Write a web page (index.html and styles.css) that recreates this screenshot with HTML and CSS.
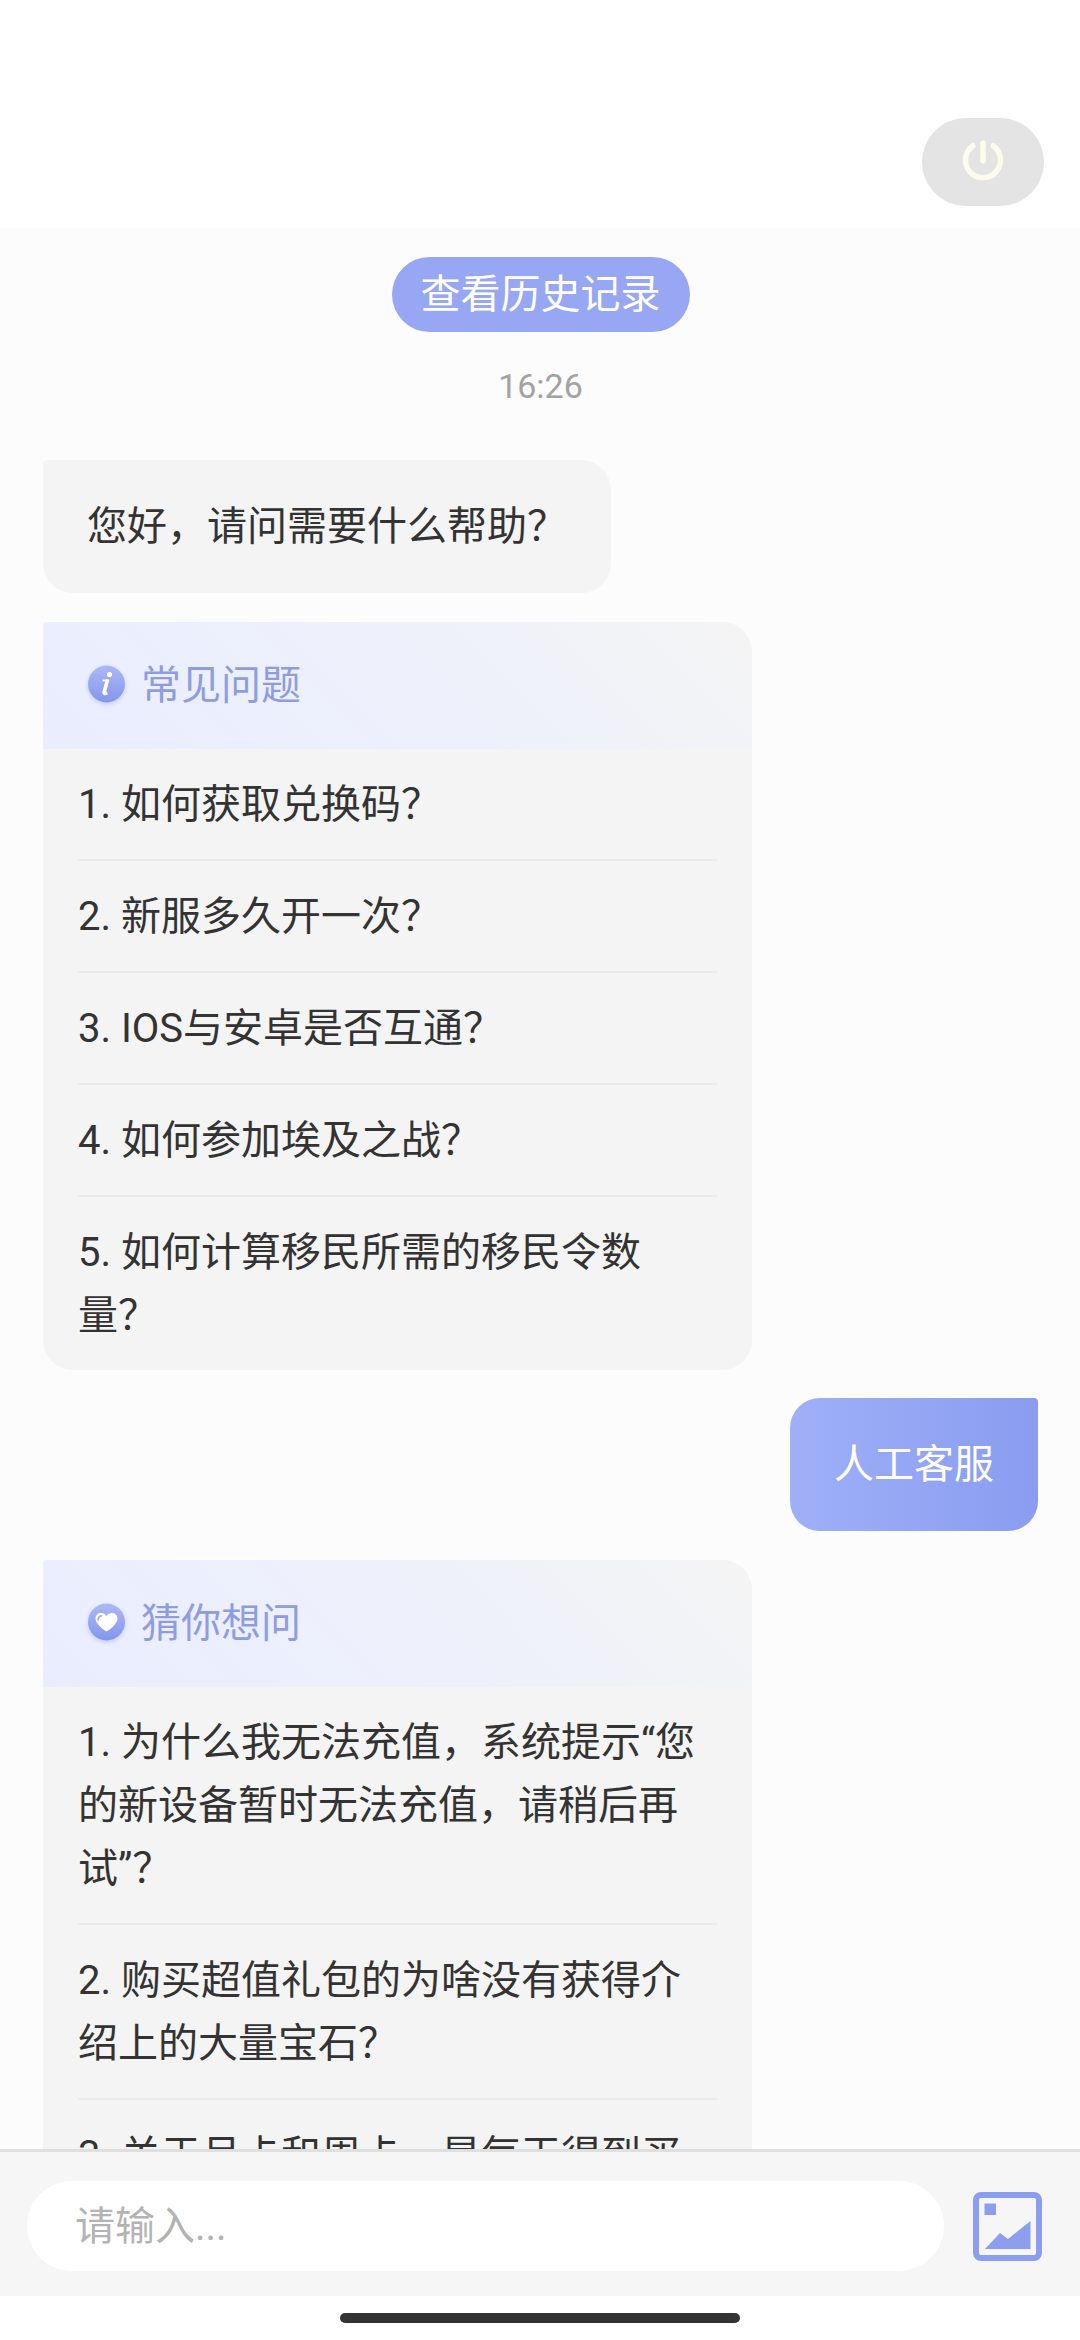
FILE: index.html
```html
<!DOCTYPE html>
<html lang="zh-CN">
<head>
<meta charset="utf-8">
<meta name="viewport" content="width=device-width, initial-scale=1">
<title>在线客服</title>
<link rel="stylesheet" href="styles.css">
</head>
<body>
<header class="topbar">
  <button class="power" type="button" aria-label="结束会话">
    <svg width="44" height="44" viewBox="0 0 44 44" fill="none" stroke="#fdfcec" stroke-width="5.500" stroke-linecap="round" aria-hidden="true">
      <path d="M22 3v18M11.700 6A17.500 17.500 0 1 0 32.300 6"/>
    </svg>
  </button>
</header>

<main class="chat">
  <button class="history" type="button">查看历史记录</button>
  <time class="time">16:26</time>

  <p class="bubble bubble-agent">您好，请问需要什么帮助？</p>

  <section class="card">
    <h2 class="card-title">
      <svg class="card-icon" viewBox="0 0 38 42" aria-hidden="true">
        <defs><linearGradient id="badge" x1="0" y1="0" x2="0" y2="1"><stop offset="0" stop-color="#adb9f5"/><stop offset="1" stop-color="#8396ec"/></linearGradient></defs>
        <circle cx="19.500" cy="19" r="18.500" fill="url(#badge)"/>
        <circle cx="22.500" cy="9.500" r="2.600" fill="#fff"/>
        <path d="M15.500 15.500h6.500" fill="none" stroke="#fff" stroke-width="1.800"/>
        <path d="M20.600 14.600 17.200 27c-.4 1.700.8 1.900 3 .6" fill="none" stroke="#fff" stroke-width="3.600"/>
      </svg>
      常见问题
    </h2>
    <ol class="questions">
      <li><button type="button">1. 如何获取兑换码？</button></li>
      <li><button type="button">2. 新服多久开一次？</button></li>
      <li><button type="button">3. IOS与安卓是否互通？</button></li>
      <li><button type="button">4. 如何参加埃及之战？</button></li>
      <li><button type="button">5. 如何计算移民所需的移民令数量？</button></li>
    </ol>
  </section>

  <p class="bubble bubble-user">人工客服</p>

  <section class="card">
    <h2 class="card-title">
      <svg class="card-icon" viewBox="0 0 38 42" aria-hidden="true">
        <circle cx="19.500" cy="19" r="18.500" fill="url(#badge)"/>
        <path d="M19.500 28.500C15.500 26.500 8.500 20.500 8.500 15.600 8.500 12 11.200 10 14 10c2.400 0 4.400 1.200 5.500 3.200C20.600 11.200 22.600 10 25 10c2.800 0 5.500 2 5.500 5.600 0 4.900-7 10.900-11 12.900z" fill="#fff"/>
        <path d="M11 17c0-2.400 1.300-3.800 3.500-4.200" fill="none" stroke="#9aa8f1" stroke-width="1.500" stroke-linecap="round"/>
      </svg>
      猜你想问
    </h2>
    <ol class="questions">
      <li><button type="button">1. 为什么我无法充值，系统提示“您的新设备暂时无法充值，请稍后再试”？</button></li>
      <li><button type="button">2. 购买超值礼包的为啥没有获得介绍上的大量宝石？</button></li>
      <li><button type="button">3. 关于月卡和周卡，是每天得到买</button></li>
    </ol>
  </section>
</main>

<footer class="composer">
  <input class="field" type="text" placeholder="请输入..." aria-label="消息">
  <button class="picture" type="button" aria-label="发送图片">
    <svg width="69" height="69" viewBox="0 0 69 69" aria-hidden="true">
      <rect x="3" y="3" width="63" height="63" rx="5" fill="none" stroke="#8c9eee" stroke-width="6"/>
      <path d="M11.500 11.500H23V23H11.500zM12 57 27 41l8 6 22.500-18V57z" fill="#8c9eee"/>
    </svg>
  </button>
</footer>
<div class="home-area"><div class="home-bar"></div></div>
</body>
</html>
```
FILE: styles.css
```css
* {
  box-sizing: border-box;
}

body {
  display: flex;
  flex-direction: column;
  height: 100vh;
  margin: 0;
  overflow: hidden;
  background: #fff;
  color: #333;
  font: 40px/63px Roboto, "Noto Sans CJK SC", sans-serif;
}

button,
input {
  margin: 0;
  padding: 0;
  border: 0;
  background: none;
  color: inherit;
  font: inherit;
}

svg {
  display: block;
}

.topbar {
  display: flex;
  justify-content: flex-end;
  padding: 118px 36px 22px;
}

.power {
  display: flex;
  align-items: center;
  justify-content: center;
  width: 122px;
  height: 88px;
  border-radius: 44px;
  background: #e4e4e4;
}

.chat {
  display: flex;
  flex: 1;
  flex-direction: column;
  align-items: flex-start;
  min-height: 0;
  padding: 29px 42px 0 43px;
  overflow: hidden;
  background: #fcfcfc;
}

.chat > * {
  flex-shrink: 0;
}

.history {
  align-self: center;
  padding: 6px 29px;
  border-radius: 38px;
  background: #98a7f4;
  color: #fff;
}

.time {
  align-self: center;
  margin: 32px 0 52px;
  color: #a3a3a3;
  font-size: 34px;
  line-height: 44px;
}

.bubble {
  margin: 0 0 29px;
  padding: 35px 44px;
}

.bubble-agent {
  border-radius: 4px 30px 30px 30px;
  background: #f4f4f4;
}

.bubble-user {
  align-self: flex-end;
  border-radius: 30px 4px 30px 30px;
  background: linear-gradient(90deg, #9fb0f8, #899cf0);
  color: #fff;
}

.card {
  width: 100%;
  max-width: 709px;
  margin-bottom: 28px;
  overflow: hidden;
  border-radius: 4px 30px 30px 30px;
  background: #f4f4f4;
}

.card-title {
  display: flex;
  gap: 16px;
  align-items: center;
  margin: 0;
  padding: 32px 44px;
  background: linear-gradient(45deg, #e9edff, #eef1fb 55%, #f4f4f4);
  color: #8f9de0;
  font-size: 40px;
  font-weight: 400;
}

.card-icon {
  width: 38px;
  height: 42px;
  overflow: visible;
  filter: drop-shadow(0 2px 2px #c4cdf8);
}

.questions {
  margin: 0;
  padding: 0 35px;
  list-style: none;
}

.questions li + li {
  border-top: 2px solid #ebebeb;
}

.questions button {
  display: block;
  width: 100%;
  padding: 24px 0 23px;
  text-align: left;
}

.composer {
  display: flex;
  gap: 29px;
  align-items: center;
  padding: 29px 38px 25px 27px;
  border-top: 3px solid #dfdfdf;
  background: #f6f6f6;
}

.field {
  flex: 1;
  min-width: 0;
  height: 90px;
  padding: 0 48px;
  border-radius: 45px;
  background: #fff;
}

.field::placeholder {
  color: #b3b3b3;
  opacity: 1;
}

.home-area {
  padding: 17px 0;
}

.home-bar {
  width: 37%;
  height: 10px;
  margin: 0 auto;
  border-radius: 5px;
  background: #333;
}
```
